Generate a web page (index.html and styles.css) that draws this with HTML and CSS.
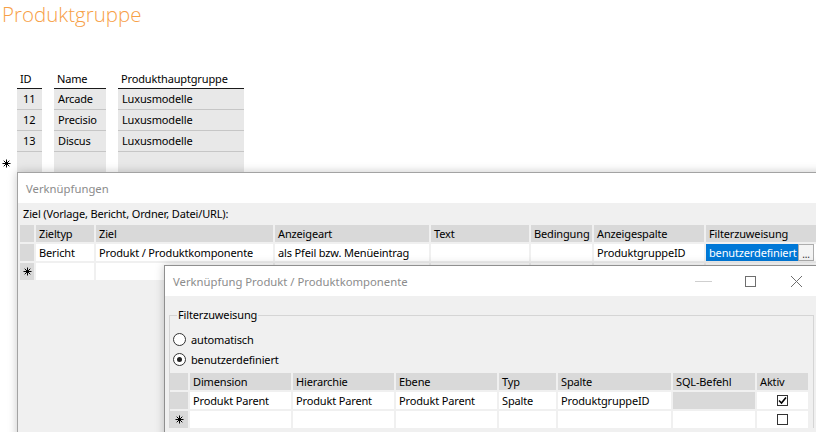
FILE: index.html
```html
<!DOCTYPE html>
<html lang="de">
<head>
<meta charset="utf-8">
<title>Produktgruppe</title>
<link rel="stylesheet" href="styles.css">
</head>
<body>
<h1 class="page-title">Produktgruppe</h1>

<div class="list">
  <div class="mark"></div><div class="lh">ID</div><div class="lh">Name</div><div class="lh">Produkthauptgruppe</div>
  <div class="mark"></div><div class="lc num">11</div><div class="lc">Arcade</div><div class="lc">Luxusmodelle</div>
  <div class="mark"></div><div class="lc num">12</div><div class="lc">Precisio</div><div class="lc">Luxusmodelle</div>
  <div class="mark"></div><div class="lc num">13</div><div class="lc">Discus</div><div class="lc">Luxusmodelle</div>
  <div class="mark"><svg class="star" width="9" height="9" viewBox="0 0 9 9"><path d="M4.5 0.5v8M0.5 4.5h8M1.7 1.7l5.6 5.6M7.3 1.7l-5.6 5.6" stroke="#000" stroke-width="1"/></svg></div><div class="lc"></div><div class="lc"></div><div class="lc"></div>
</div>

<div class="win win-links">
  <div class="titlebar"><span class="title">Verknüpfungen</span></div>
  <div class="win-body">
    <div class="caption">Ziel (Vorlage, Bericht, Ordner, Datei/URL):</div>
    <div class="grid grid-links">
      <div class="gh rh"></div><div class="gh">Zieltyp</div><div class="gh">Ziel</div><div class="gh">Anzeigeart</div><div class="gh">Text</div><div class="gh">Bedingung</div><div class="gh">Anzeigespalte</div><div class="gh">Filterzuweisung</div>
      <div class="gh rh"></div><div class="gc">Bericht</div><div class="gc">Produkt / Produktkomponente</div><div class="gc">als Pfeil bzw. Menüeintrag</div><div class="gc"></div><div class="gc"></div><div class="gc">ProduktgruppeID</div><div class="gc sel-cell"><span class="sel">benutzerdefiniert</span><span class="dots">...</span></div>
      <div class="gh rh"><svg class="star" width="9" height="9" viewBox="0 0 9 9"><path d="M4.5 0.5v8M0.5 4.5h8M1.7 1.7l5.6 5.6M7.3 1.7l-5.6 5.6" stroke="#000" stroke-width="1"/></svg></div><div class="gc"></div><div class="gc"></div><div class="gc"></div><div class="gc"></div><div class="gc"></div><div class="gc"></div><div class="gc"></div>
    </div>
  </div>
</div>

<div class="win win-dialog">
  <div class="titlebar">
    <span class="title">Verknüpfung Produkt / Produktkomponente</span>
    <div class="controls">
      <span class="ctl"><svg width="18" height="10" viewBox="0 0 18 10"><path d="M0 5.5h17" stroke="#cfcfcf" stroke-width="1"/></svg></span>
      <span class="ctl"><svg width="12" height="12" viewBox="0 0 12 12"><rect x="1.5" y="1.5" width="10" height="10" fill="none" stroke="#6e6e6e" stroke-width="1"/></svg></span>
      <span class="ctl"><svg width="12" height="12" viewBox="0 0 12 12"><path d="M1 1l11 11M12 1L1 12" stroke="#6e6e6e" stroke-width="1"/></svg></span>
    </div>
  </div>
  <div class="win-body">
    <fieldset class="group">
      <legend>Filterzuweisung</legend>
      <label class="radio"><span class="dot"></span>automatisch</label>
      <label class="radio"><span class="dot on"></span>benutzerdefiniert</label>
      <div class="grid grid-filter">
        <div class="gh rh"></div><div class="gh">Dimension</div><div class="gh">Hierarchie</div><div class="gh">Ebene</div><div class="gh">Typ</div><div class="gh">Spalte</div><div class="gh">SQL-Befehl</div><div class="gh">Aktiv</div>
        <div class="gh rh"></div><div class="gc">Produkt Parent</div><div class="gc">Produkt Parent</div><div class="gc">Produkt Parent</div><div class="gc">Spalte</div><div class="gc">ProduktgruppeID</div><div class="gc ro"></div><div class="gc center"><span class="check on"><svg width="9" height="9" viewBox="0 0 9 9"><path d="M1 4.5l2.5 2.5L8 1.5" fill="none" stroke="#000" stroke-width="1.6"/></svg></span></div>
        <div class="gh rh"><svg class="star" width="9" height="9" viewBox="0 0 9 9"><path d="M4.5 0.5v8M0.5 4.5h8M1.7 1.7l5.6 5.6M7.3 1.7l-5.6 5.6" stroke="#000" stroke-width="1"/></svg></div><div class="gc"></div><div class="gc"></div><div class="gc"></div><div class="gc"></div><div class="gc"></div><div class="gc"></div><div class="gc center"><span class="check"></span></div>
      </div>
    </fieldset>
  </div>
</div>
</body>
</html>
```

FILE: styles.css
```css
html, body {
  margin: 0;
  padding: 0;
}
body {
  width: 816px;
  height: 432px;
  overflow: hidden;
  position: relative;
  background: #fff;
  font-family: "Noto Sans", "Liberation Sans", sans-serif;
  font-size: 11px;
  letter-spacing: -0.15px;
  color: #000;
}

.page-title {
  margin: 0;
  padding-left: 2px;
  font-family: "Open Sans", "Noto Sans", sans-serif;
  font-weight: 300;
  font-size: 20.5px;
  letter-spacing: 0;
  line-height: 28px;
  color: #f7a046;
}

/* top list */
.list {
  margin-top: 41px;
  display: grid;
  grid-template-columns: 5px 25px 52px 126px;
  grid-template-rows: 20px 21px 21px 21px 21px;
  column-gap: 12px;
}
.mark {
  position: relative;
  overflow: visible;
}
.mark .star {
  position: absolute;
  left: 2px;
  top: 7px;
}
.lh {
  border-bottom: 1px solid #1a1a1a;
  line-height: 19px;
  padding-left: 3px;
}
.lc {
  background: #e8e8e8;
  border-bottom: 1px solid #c6c6c6;
  line-height: 20px;
  padding-left: 4px;
}
.lc.num {
  padding-left: 6px;
}

/* windows */
.win {
  position: absolute;
  background: #f0f0f0;
  border: 1px solid #a3a3a3;
  box-shadow: 0 0 9px rgba(0, 0, 0, 0.22);
}
.win-links {
  left: 17px;
  top: 172px;
  width: 830px;
  height: 300px;
}
.win-dialog {
  left: 164px;
  top: 265px;
  width: 654px;
  height: 200px;
  border-color: #8f8f8f;
}
.titlebar {
  height: 30px;
  background: #fff;
  display: flex;
  align-items: center;
  padding-left: 8px;
}
.title {
  color: #8c8c8c;
  font-size: 11.3px;
  letter-spacing: 0;
}
.controls {
  margin-left: auto;
  display: flex;
  align-items: center;
  height: 30px;
}
.ctl {
  width: 46px;
  height: 30px;
  display: flex;
  align-items: center;
  justify-content: center;
}

.win-links .win-body {
  padding-left: 2px;
}
.caption {
  height: 22px;
  line-height: 22px;
  padding-left: 3px;
}

/* data grids */
.grid {
  display: grid;
  gap: 2px;
  grid-auto-rows: 17px;
}
.grid-links {
  grid-template-columns: 14px 58px 177px 154px 98px 61px 110px 130px;
}
.gh {
  background: #d9d9d9;
  line-height: 17px;
  padding: 0 3px;
  white-space: nowrap;
}
.gh.rh {
  padding: 0;
  display: flex;
  align-items: center;
  justify-content: center;
}
.gc {
  background: #fff;
  line-height: 17px;
  padding: 0 3px;
  white-space: nowrap;
  overflow: hidden;
}
.gc.ro {
  background: #d9d9d9;
}
.gc.center {
  display: flex;
  align-items: center;
  justify-content: center;
}
.sel-cell {
  padding: 0;
  display: flex;
  align-items: stretch;
}
.sel {
  background: #0078d7;
  color: #fff;
  width: 89px;
  padding-left: 3px;
  overflow: hidden;
}
.dots {
  width: 14px;
  border: 1px solid #adadad;
  background: #f4f4f4;
  line-height: 18px;
  text-align: center;
  font-size: 10px;
  color: #333;
}

/* dialog content */
.group {
  margin: 11px 5px 0 4px;
  padding: 0;
  border: 1px solid #d5d5d5;
  border-bottom: none;
}
.group legend {
  margin-left: 7px;
  padding: 0 1px;
  line-height: 16px;
}
.radio {
  display: flex;
  align-items: center;
  height: 20px;
  padding-left: 3px;
}
.radio:first-of-type {
  margin-top: 6px;
}
.dot {
  width: 11px;
  height: 11px;
  border: 1px solid #333;
  border-radius: 50%;
  background: #fff;
  margin-right: 5px;
  display: flex;
  align-items: center;
  justify-content: center;
}
.dot.on::after {
  content: "";
  width: 5px;
  height: 5px;
  border-radius: 50%;
  background: #222;
}
.grid-filter {
  margin-top: 4px;
  grid-template-columns: 18px 101px 101px 101px 57px 113px 82px 51px;
}
.check {
  width: 9px;
  height: 9px;
  border: 1px solid #333;
  background: #fff;
  display: flex;
  align-items: center;
  justify-content: center;
}
```
